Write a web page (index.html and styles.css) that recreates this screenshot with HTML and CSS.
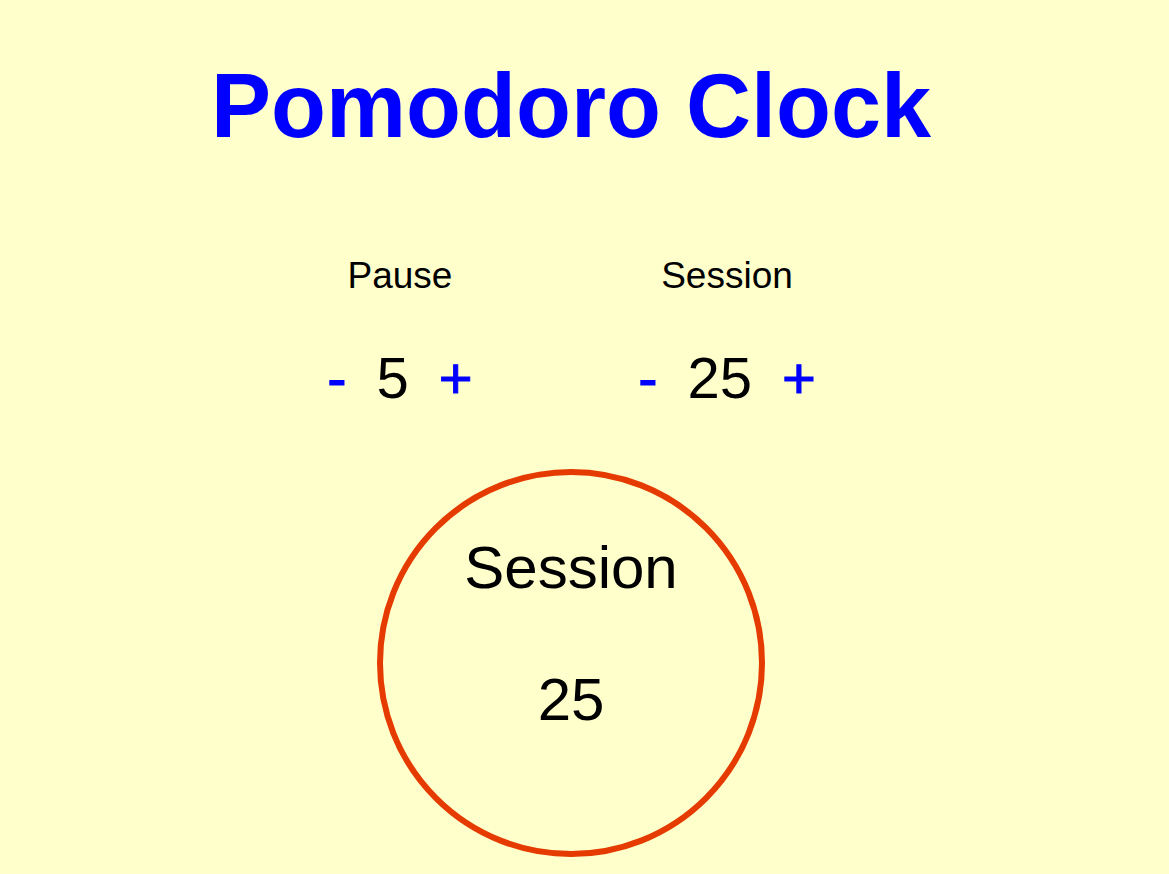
FILE: index.html
```html
<!DOCTYPE html>
<html lang="en">
<head>
<meta charset="utf-8">
<title>Pomodoro Clock</title>
<link rel="stylesheet" href="styles.css">
</head>
<body>
<div class="page">
  <h1 class="title">Pomodoro Clock</h1>
  <div class="settings">
    <div class="setting">
      <div class="setting-label">Pause</div>
      <div class="controls">
        <button class="ctrl">-</button>
        <span class="value">5</span>
        <button class="ctrl">+</button>
      </div>
    </div>
    <div class="setting">
      <div class="setting-label">Session</div>
      <div class="controls">
        <button class="ctrl">-</button>
        <span class="value">25</span>
        <button class="ctrl">+</button>
      </div>
    </div>
  </div>
  <div class="clock">
    <div class="clock-label">Session</div>
    <div class="clock-time">25</div>
  </div>
</div>
</body>
</html>
```
FILE: styles.css
```css
html, body {
  margin: 0;
  padding: 0;
  background: #ffffcc;
}
body {
  font-family: "Liberation Sans", Arial, sans-serif;
  color: #000;
}
.page {
  width: 1142px;
  display: flex;
  flex-direction: column;
  align-items: center;
}
.title {
  margin: 61px 0 0;
  font-size: 90px;
  line-height: 90px;
  font-weight: bold;
  color: #0000ff;
}
.settings {
  display: flex;
  justify-content: center;
  gap: 127px;
  padding-right: 15px;
  margin-top: 106px;
}
.setting {
  width: 200px;
  display: flex;
  flex-direction: column;
  align-items: center;
}
.setting-label {
  font-size: 37px;
  line-height: 37px;
}
.controls {
  margin-top: 55px;
  display: flex;
  align-items: center;
  gap: 30px;
  font-size: 58px;
  line-height: 58px;
}
.ctrl {
  font: inherit;
  color: #0000ff;
  -webkit-text-stroke: 1px #0000ff;
  background: none;
  border: none;
  padding: 0;
  margin: 0;
  line-height: 58px;
  cursor: pointer;
}
.value {
  line-height: 58px;
}
.clock {
  margin-top: 62px;
  width: 376px;
  height: 313px;
  padding-top: 63px;
  border: 6px solid #e53b00;
  border-radius: 50%;
  display: flex;
  flex-direction: column;
  align-items: center;
  font-size: 60px;
  line-height: 60px;
}
.clock-time {
  margin-top: 72px;
}
```
